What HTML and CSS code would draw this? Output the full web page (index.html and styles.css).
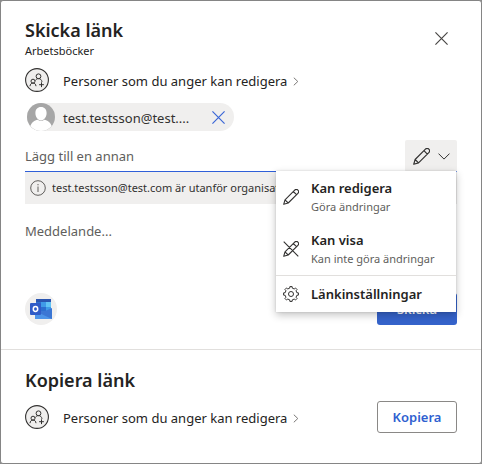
FILE: index.html
```html
<!DOCTYPE html>
<html lang="sv">
<head>
<meta charset="utf-8">
<meta name="viewport" content="width=device-width, initial-scale=1">
<title>Skicka länk</title>
<link rel="stylesheet" href="styles.css">
</head>
<body>
<svg class="symbols" aria-hidden="true">
  <symbol id="people" viewBox="0 0 24 24">
    <circle cx="12" cy="12" r="11.4" fill="#efeeed" stroke="#323130" stroke-width="1.1"/>
    <g fill="none" stroke="#323130" stroke-width="1">
      <circle cx="13.5" cy="8.3" r="2.4"/>
      <circle cx="8" cy="13.2" r="2"/>
      <path d="M10.200 12.600c.8-1.200 1.800-2 3.300-2 2 0 3.200 1.300 3.500 3.300M5 18.200c.2-2 1.300-3.200 3-3.200s2.800 1.200 3 3.200M16.500 14.300v4.800M14.100 16.700h4.800"/>
    </g>
  </symbol>
  <symbol id="pencil" viewBox="0 0 16 16">
    <path d="M.7 15.300 2 10.800 11.700 1.100a2.200 2.200 0 0 1 3.200 3.200L5.200 14zM2 10.800 5.200 14M10.300 2.500l3.200 3.200" fill="none" stroke="currentColor" stroke-width="1.1" stroke-linejoin="round"/>
  </symbol>
  <symbol id="pencil-off" viewBox="0 0 16 16">
    <path d="M.7 15.300 2 10.800 11.700 1.100a2.200 2.200 0 0 1 3.200 3.200L5.200 14zM2 10.800 5.200 14M10.300 2.500l3.200 3.200M.7.7l14.600 14.600" fill="none" stroke="currentColor" stroke-width="1.1" stroke-linejoin="round"/>
  </symbol>
  <symbol id="cross" viewBox="0 0 12 12">
    <path d="M.4.4l11.200 11.200M11.600.4.4 11.600" fill="none" stroke="currentColor" stroke-width="1.1"/>
  </symbol>
  <symbol id="chevron-right" viewBox="0 0 6 9">
    <path d="M.8.7 4.800 4.500.8 8.300" fill="none" stroke="currentColor"/>
  </symbol>
</svg>

<main class="dialog">
  <section class="send">
    <header class="header">
      <div>
        <h1 class="title">Skicka länk</h1>
        <p class="subtitle">Arbetsböcker</p>
      </div>
      <button class="close" type="button" aria-label="Stäng"><svg width="13" height="13"><use href="#cross"/></svg></button>
    </header>

    <button class="scope" type="button">
      <svg width="24" height="24"><use href="#people"/></svg>
      <span class="scope-text">Personer som du anger kan redigera</span>
      <svg class="chevron" width="6" height="9"><use href="#chevron-right"/></svg>
    </button>

    <div class="chip">
      <svg width="28" height="28" viewBox="0 0 28 28" aria-hidden="true">
        <circle cx="14" cy="14" r="14" fill="#a6a6a6"/>
        <path d="M14 4c3.600 0 5.600 2.400 5.600 6 0 3.800-2.300 7.400-5.600 7.400S8.400 13.800 8.400 10c0-3.600 2-6 5.600-6zM3.300 23c1.500-4 4-5.400 7.500-6.300 2 1.700 4.400 1.700 6.400 0 3.500.9 6 2.300 7.500 6.300A14 14 0 0 1 14 28 14 14 0 0 1 3.300 23z" fill="#fff"/>
      </svg>
      <span class="chip-name">test.testsson@test....</span>
      <button class="chip-remove" type="button" aria-label="Ta bort"><svg width="13" height="13"><use href="#cross"/></svg></button>
    </div>

    <div class="add">
      <input class="add-input" type="text" placeholder="Lägg till en annan" aria-label="Lägg till en annan">
      <div class="permission">
        <button class="permission-button" type="button" aria-label="Behörighet" aria-expanded="true">
          <svg width="17" height="17"><use href="#pencil"/></svg>
          <svg width="12" height="7" viewBox="0 0 12 7"><path d="M.5.6 6 6.100 11.500.6" fill="none" stroke="currentColor"/></svg>
        </button>
        <div class="menu" role="menu">
          <button class="item" type="button" role="menuitem">
            <svg width="16" height="16"><use href="#pencil"/></svg>
            <span><span class="item-title">Kan redigera</span><span class="item-note">Göra ändringar</span></span>
          </button>
          <button class="item" type="button" role="menuitem">
            <svg width="16" height="16"><use href="#pencil-off"/></svg>
            <span><span class="item-title">Kan visa</span><span class="item-note">Kan inte göra ändringar</span></span>
          </button>
          <button class="item item-settings" type="button" role="menuitem">
            <svg width="16" height="16" viewBox="0 0 16 16" fill="none" stroke="currentColor">
              <path d="M6.730 2.140 6.860.580 9.140.580 9.270 2.140 11.250 2.950 12.440 1.950 14.050 3.560 13.050 4.750 13.860 6.730 15.420 6.860 15.420 9.140 13.860 9.270 13.050 11.250 14.050 12.440 12.440 14.050 11.250 13.050 9.270 13.860 9.140 15.420 6.860 15.420 6.730 13.860 4.750 13.050 3.560 14.050 1.950 12.440 2.950 11.250 2.140 9.270.580 9.140.580 6.860 2.140 6.730 2.950 4.750 1.950 3.560 3.560 1.950 4.750 2.950z" stroke-linejoin="round"/>
              <circle cx="8" cy="8" r="2.5"/>
            </svg>
            <span class="item-title">Länkinställningar</span>
          </button>
        </div>
      </div>
    </div>

    <div class="notice">
      <svg width="16" height="16" viewBox="0 0 16 16" fill="none" stroke="#605e5c" aria-hidden="true"><circle cx="8" cy="8" r="7.3"/><path d="M8 6.500V12M8 4v1.300"/></svg>
      <span class="notice-text">test.testsson@test.com är utanför organisationen.</span>
    </div>

    <textarea class="message" rows="1" placeholder="Meddelande..." aria-label="Meddelande"></textarea>

    <div class="actions">
      <button class="outlook" type="button" aria-label="Outlook">
        <svg width="32" height="32" viewBox="0 0 32 32">
          <path d="M11 6h15v4H11z" fill="#2a55b0"/>
          <path d="M11 9h5v5h-5z" fill="#2c6fd0"/>
          <path d="M16 9h5v5h-5z" fill="#3f9be8"/>
          <path d="M21 9h5v5h-5z" fill="#62c4f5"/>
          <path d="M11 14h5v5h-5z" fill="#2454b0"/>
          <path d="M16 14h5v5h-5z" fill="#2c6fd0"/>
          <path d="M21 14h5v5h-5z" fill="#3f9be8"/>
          <path d="M10 18h10l7-3v11H10z" fill="#3b76d4"/>
          <path d="M10 18l17 8H10z" fill="#4d94e8"/>
          <rect x="5" y="10" width="11" height="12" rx="1" fill="#2f5bc7"/>
          <ellipse cx="10.5" cy="16" rx="2.2" ry="2.4" fill="none" stroke="#fff" stroke-width="1.5"/>
        </svg>
      </button>
      <button class="button button-primary" type="button">Skicka</button>
    </div>
  </section>

  <section class="copy">
    <h2 class="title">Kopiera länk</h2>
    <div class="copy-row">
      <button class="scope" type="button">
        <svg width="24" height="24"><use href="#people"/></svg>
        <span class="scope-text">Personer som du anger kan redigera</span>
        <svg class="chevron" width="6" height="9"><use href="#chevron-right"/></svg>
      </button>
      <button class="button button-outline" type="button">Kopiera</button>
    </div>
  </section>
</main>
</body>
</html>
```
FILE: styles.css
```css
* {
  box-sizing: border-box;
}

body {
  margin: 0;
  color: #242322;
  background: #8a8a8a;
  font-family: "Noto Sans", sans-serif;
  font-size: 13px;
  line-height: 20px;
}

button,
input,
textarea {
  margin: 0;
  padding: 0;
  border: 0;
  background: none;
  color: inherit;
  font: inherit;
}

svg {
  display: block;
  flex: none;
}

.symbols {
  position: absolute;
  width: 0;
  height: 0;
}

.dialog {
  min-height: 100vh;
  border: 1px solid #858585;
  border-radius: 3px;
  background: #fff;
}

.send {
  padding: 16px 24px 24px;
  border-bottom: 1px solid #e1dfdd;
}

.header {
  display: flex;
  justify-content: space-between;
  align-items: center;
}

.title {
  margin: 0;
  font-size: 18px;
  font-weight: 600;
  line-height: 26px;
}

.subtitle {
  margin: 0;
  font-size: 11px;
  line-height: 16px;
}

.close {
  display: grid;
  place-items: center;
  width: 32px;
  height: 32px;
  color: #484644;
}

.scope {
  display: flex;
  align-items: center;
  height: 24px;
  text-align: left;
}

.send .scope {
  margin-top: 9px;
}

.scope-text {
  margin-left: 14px;
  padding-top: 2px;
}

.chevron {
  margin: 2px 0 0 6px;
  color: #797775;
}

.chip {
  display: flex;
  align-items: center;
  width: 207px;
  height: 28px;
  margin: 11px 0 9px 2px;
  border-radius: 14px;
  background: #f0efee;
}

.chip-name {
  flex: 1;
  margin-left: 8px;
  padding-top: 2px;
  color: #323130;
}

.chip-remove {
  display: grid;
  place-items: center;
  width: 32px;
  height: 28px;
  color: #3a66d6;
}

.add {
  display: flex;
  height: 32px;
  border-bottom: 1px solid #2f5fd8;
}

.add-input {
  flex: 1;
  min-width: 0;
}

::placeholder {
  color: #605e5c;
  opacity: 1;
}

.permission {
  position: relative;
}

.permission-button {
  display: flex;
  justify-content: center;
  align-items: center;
  gap: 8px;
  width: 52px;
  height: 32px;
  border-radius: 2px;
  background: #f0efee;
  color: #323130;
}

.menu {
  position: absolute;
  z-index: 1;
  top: 31px;
  right: 1px;
  width: 180px;
  background: #fff;
  box-shadow: 0 3px 8px rgba(0, 0, 0, 0.24), 0 0 2px rgba(0, 0, 0, 0.14);
}

.item {
  display: flex;
  align-items: center;
  gap: 12px;
  width: 100%;
  height: 52px;
  padding: 0 7px;
  color: #323130;
  text-align: left;
  white-space: nowrap;
}

.item-title,
.item-note {
  display: block;
}

.item-title {
  color: #242322;
  font-weight: 600;
}

.item-note {
  color: #605e5c;
  font-size: 11px;
  line-height: 18px;
}

.item-settings {
  height: 37px;
  border-top: 1px solid #e1dfdd;
}

.notice {
  display: flex;
  align-items: center;
  gap: 6px;
  height: 32px;
  padding: 0 5px;
  background: #f0efee;
  color: #323130;
  font-size: 11px;
  white-space: nowrap;
}

.notice-text {
  overflow: hidden;
}

.message {
  display: block;
  width: 100%;
  height: 72px;
  margin-top: 17px;
  resize: none;
}

.actions {
  display: flex;
  justify-content: space-between;
}

.outlook {
  border-radius: 50%;
  background: #f0efee;
}

.button {
  width: 80px;
  height: 32px;
  border-radius: 3px;
  font-weight: 600;
}

.button-primary {
  background: #3563cb;
  color: #fff;
}

.button-outline {
  border: 1px solid #8a8886;
  color: #2f5fd0;
}

.copy {
  padding: 17px 24px 29px;
}

.copy-row {
  display: flex;
  justify-content: space-between;
  align-items: center;
  margin-top: 8px;
}
```
